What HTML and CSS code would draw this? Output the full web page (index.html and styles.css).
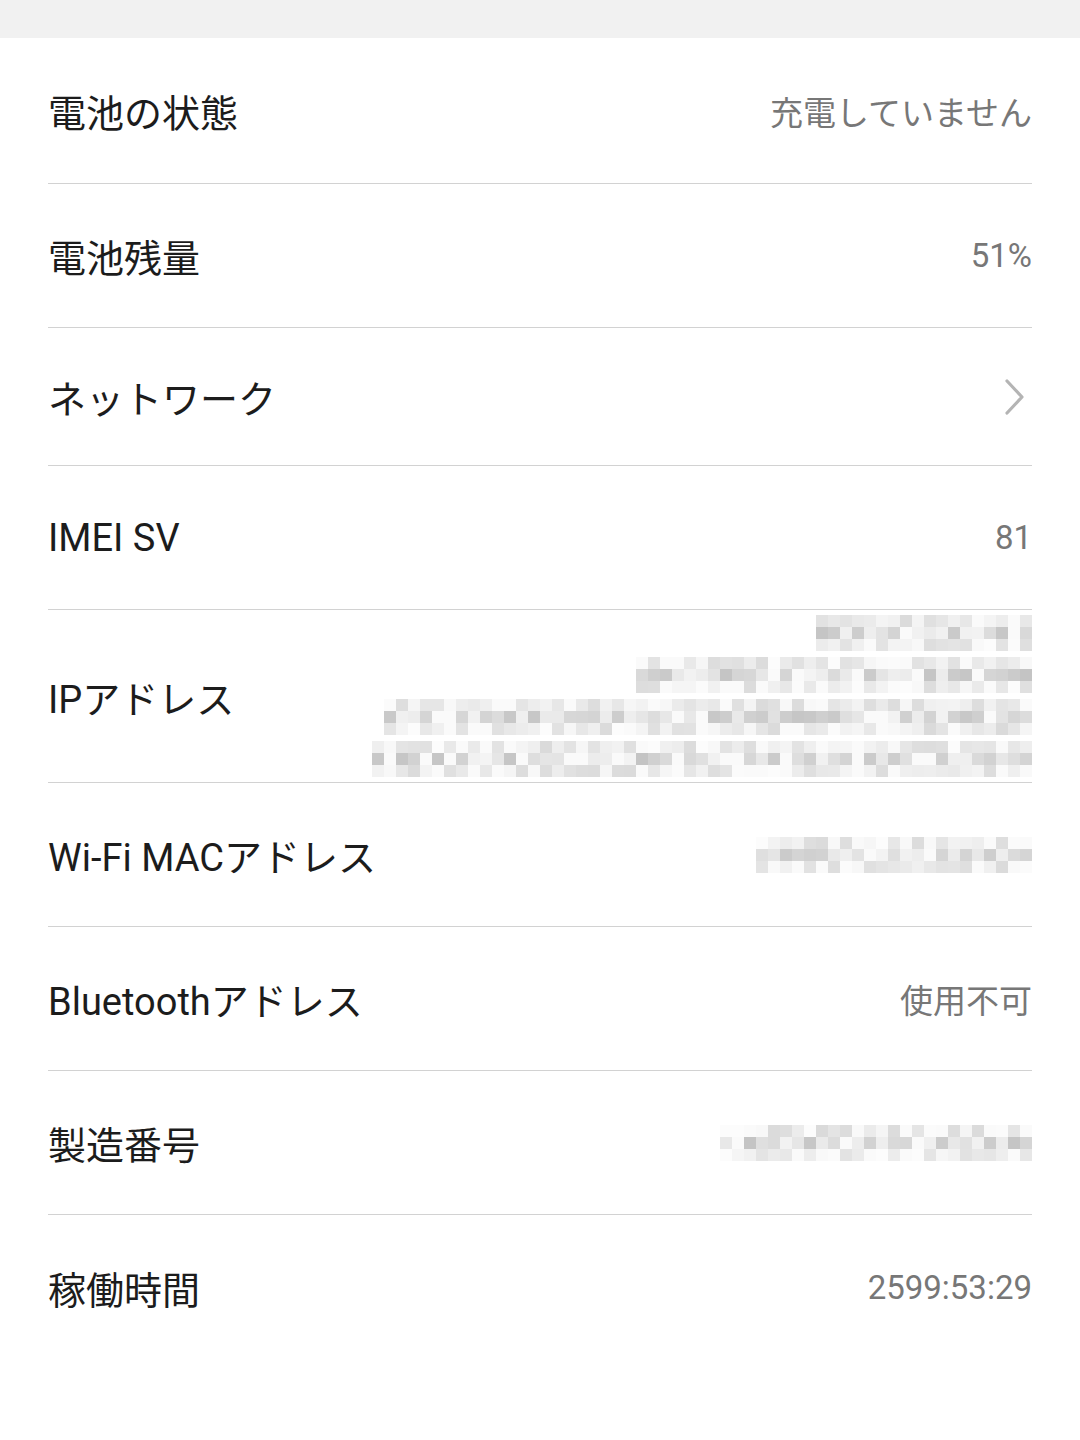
FILE: index.html
```html
<!DOCTYPE html>
<html lang="ja">

<head>
  <meta charset="UTF-8" />
  <meta name="viewport" content="width=device-width, initial-scale=1.0" />
  <title>端末情報</title>
  <link rel="stylesheet" href="styles.css">
</head>

<body>
  <div class="topbar"></div>

  <ul class="info-list">
    <li class="row row-first">
      <span class="label">電池の状態</span>
      <span class="value">充電していません</span>
    </li>
    <li class="row">
      <span class="label">電池残量</span>
      <span class="value">51%</span>
    </li>
    <li class="row row-link">
      <span class="label">ネットワーク</span>
      <svg class="chevron" width="22" height="38" viewBox="0 0 22 38">
        <path d="M3 3 L18 19 L3 35" fill="none" stroke="#b4b4b4" stroke-width="3.2" stroke-linecap="round" stroke-linejoin="round" />
      </svg>
    </li>
    <li class="row">
      <span class="label">IMEI SV</span>
      <span class="value">81</span>
    </li>
    <li class="row row-tall">
      <span class="label">IPアドレス</span>
      <div class="value-lines">
        <div class="mosaic" data-cols="18" data-seed="3"></div>
        <div class="mosaic" data-cols="33" data-seed="7"></div>
        <div class="mosaic" data-cols="54" data-seed="11"></div>
        <div class="mosaic" data-cols="55" data-seed="19"></div>
      </div>
    </li>
    <li class="row">
      <span class="label">Wi-Fi MACアドレス</span>
      <div class="mosaic" data-cols="23" data-seed="23"></div>
    </li>
    <li class="row">
      <span class="label">Bluetoothアドレス</span>
      <span class="value">使用不可</span>
    </li>
    <li class="row">
      <span class="label">製造番号</span>
      <div class="mosaic" data-cols="26" data-seed="29"></div>
    </li>
    <li class="row row-last">
      <span class="label">稼働時間</span>
      <span class="value">2599:53:29</span>
    </li>
  </ul>

  <script>
    // pixelated (hidden) values
    function rand(seed) {
      let s = seed * 9301 + 49297;
      return () => {
        s = (s * 9301 + 49297) % 233280;
        return s / 233280;
      };
    }

    document.querySelectorAll(".mosaic").forEach((box) => {
      const cols = +box.dataset.cols;
      const next = rand(+box.dataset.seed);
      box.style.gridTemplateColumns = "repeat(" + cols + ", 12px)";
      for (let r = 0; r < 3; r++) {
        for (let c = 0; c < cols; c++) {
          const cell = document.createElement("span");
          let v = r === 1 ? 196 + next() * 48 : 218 + next() * 36;
          if (next() < 0.12) v = 250;
          v = Math.round(Math.min(v, 252));
          cell.style.background = "rgb(" + v + "," + v + "," + v + ")";
          box.appendChild(cell);
        }
      }
    });
  </script>
</body>

</html>
```

FILE: styles.css
```css
body {
  background: #fff;
  color: #1c1c1c;
  font-family: Roboto, "Noto Sans CJK JP", sans-serif;
  margin: 0;
}

.topbar {
  background: #f1f1f1;
  height: 38px;
}

.info-list {
  list-style: none;
  margin: 0;
  padding: 0 48px;
}

.row {
  align-items: center;
  border-bottom: 1px solid #d2d2d2;
  box-sizing: border-box;
  display: flex;
  height: 144px;
  justify-content: space-between;
}

.row-first {
  height: 146px;
}

.row-link {
  height: 138px;
}

.row-tall {
  height: 173px;
}

.row-last {
  border-bottom: none;
}

.label {
  font-size: 38px;
  white-space: nowrap;
}

.value {
  color: #777;
  font-size: 33px;
}

.chevron {
  display: block;
  margin-right: 6px;
}

.value-lines {
  align-items: flex-end;
  display: flex;
  flex-direction: column;
  gap: 6px;
}

.mosaic {
  display: grid;
  grid-auto-rows: 12px;
}
```
